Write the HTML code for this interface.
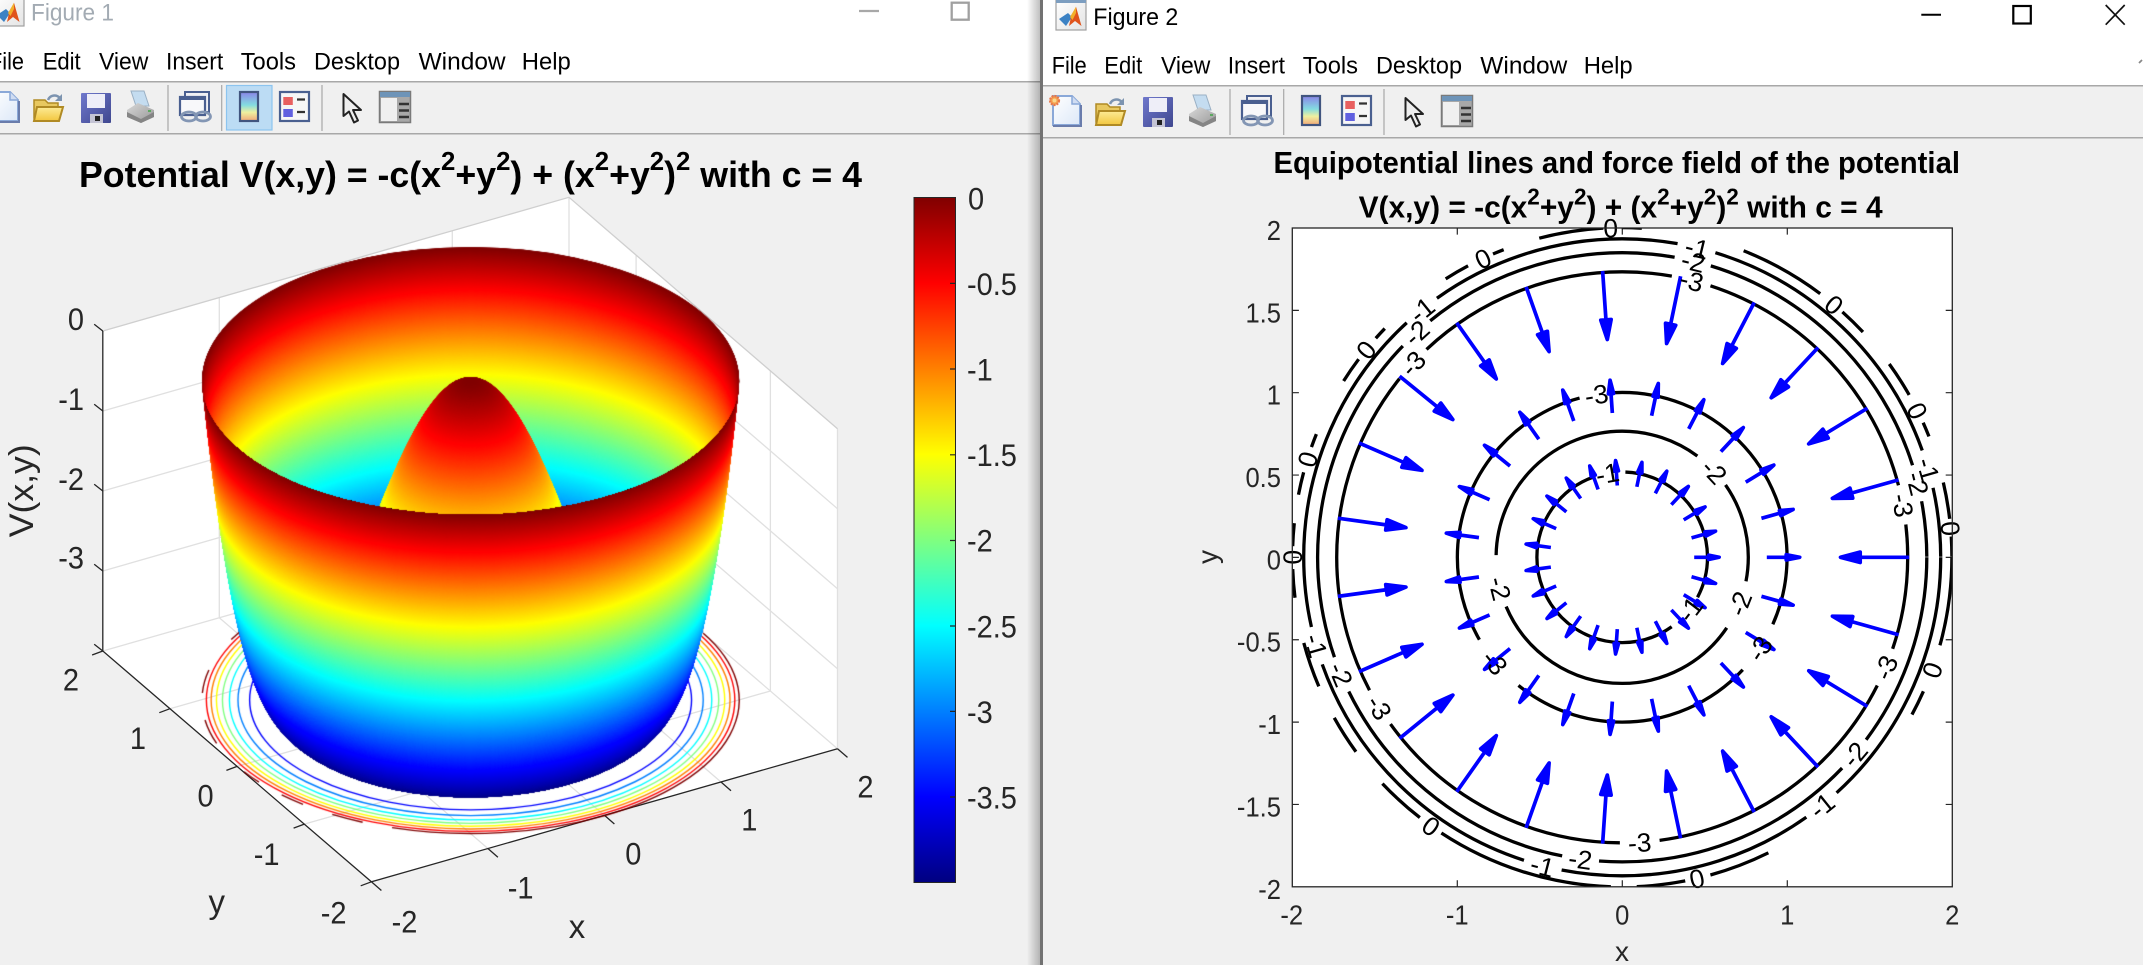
<!DOCTYPE html>
<html lang="en"><head><meta charset="utf-8"><title>Figures</title>
<style>
html,body{margin:0;padding:0;background:#f0f0f0;width:2143px;height:965px;overflow:hidden}
#w{position:absolute;left:0;top:0;width:2143px;height:965px;overflow:hidden;filter:blur(.3px)}
svg,canvas{position:absolute;left:0;top:0}
text{font-family:"Liberation Sans",Arial,sans-serif}
.m{font-size:24px;fill:#000}
.t{font-size:31.5px;fill:#262626;transform-box:fill-box;transform-origin:0% 50%;transform:scaleX(.92)}
.s{font-size:27.5px;fill:#262626;transform-box:fill-box;transform-origin:0% 50%;transform:scaleX(.93)}
.c{text-anchor:middle;transform-origin:50% 50%}
.e{text-anchor:end;transform-origin:100% 50%}
.l{font-size:26.5px;fill:#000;text-anchor:middle}
</style></head><body><div id="w">
<svg width="2143" height="965" viewBox="0 0 2143 965">
<defs>
<linearGradient id="jetg" x1="0" y1="1" x2="0" y2="0"><stop offset="0" stop-color="#000080"/><stop offset=".125" stop-color="#0000ff"/><stop offset=".375" stop-color="#00ffff"/><stop offset=".625" stop-color="#ffff00"/><stop offset=".875" stop-color="#ff0000"/><stop offset="1" stop-color="#800000"/></linearGradient>
<linearGradient id="shd" x1="0" y1="0" x2="1" y2="0"><stop offset="0" stop-color="#000" stop-opacity="0"/><stop offset="1" stop-color="#000" stop-opacity=".25"/></linearGradient>
<linearGradient id="fold" x1="0" y1="0" x2="0" y2="1"><stop offset="0" stop-color="#fdeb96"/><stop offset="1" stop-color="#f2c63e"/></linearGradient>
<linearGradient id="cbi" x1="0" y1="0" x2="0" y2="1"><stop offset="0" stop-color="#8a84e8"/><stop offset=".45" stop-color="#84dce0"/><stop offset=".7" stop-color="#eef0a0"/><stop offset="1" stop-color="#f2a878"/></linearGradient>
<linearGradient id="doc" x1="0" y1="0" x2="1" y2="1"><stop offset="0" stop-color="#fff"/><stop offset="1" stop-color="#dce8f8"/></linearGradient>
<linearGradient id="box" x1="0" y1="0" x2="1" y2="1"><stop offset="0" stop-color="#fff"/><stop offset="1" stop-color="#e4e4e4"/></linearGradient>
<linearGradient id="prt" x1="0" y1="0" x2="1" y2="1"><stop offset="0" stop-color="#d8d8d8"/><stop offset="1" stop-color="#969696"/></linearGradient>
<linearGradient id="sv" x1="0" y1="0" x2="1" y2="1"><stop offset="0" stop-color="#6f78cc"/><stop offset="1" stop-color="#3f478f"/></linearGradient>
<clipPath id="ax"><rect x="-329.9" y="-329.3" width="660" height="658.7"/></clipPath>
<g id="logo">
<rect x="-6" y="-4" width="30" height="30" fill="url(#box)" stroke="#a0a0a0" stroke-width="1.2"/>
<rect x="-6" y="-4" width="30" height="3" fill="#7d9ec0"/>
<path d="M-3 15 6 9 10 13 4 22Z" fill="#3c82c4"/>
<path d="M14 2.700 19.500 22 13 17 7 22 9 13Z" fill="#e0541c"/>
<path d="M14 2.700 8 13 10.500 16 14 9Z" fill="#f2b02c"/>
</g>
<g id="tools">
<!-- new -->
<path d="M-9 92H10L18 100V121H-9Z" fill="url(#doc)" stroke="#8aa8d8" stroke-width="2"/>
<path d="M-9 122H19V101" fill="none" stroke="#6a7cab" stroke-width="2"/>
<path d="M10 92V100H18" fill="#cfdcf2" stroke="#8aa8d8" stroke-width="1.500"/>
<circle cx="-7.500" cy="96.500" r="4.500" fill="#f4a050" stroke="#e8784a" stroke-width="2.200" stroke-dasharray="2 1"/>
<circle cx="-7.500" cy="96.500" r="2" fill="#f8d890"/>
<!-- open -->
<path d="M34 104V100H45L48 103H58V118H34Z" fill="#e8c860" stroke="#b08a24" stroke-width="1.500"/>
<path d="M34 121 37 107H63L59 121Z" fill="url(#fold)" stroke="#b08a24" stroke-width="2"/>
<path d="M48 100C50 95 56 94 60 98" fill="none" stroke="#7d94b0" stroke-width="2.500"/>
<path d="M62 94V101H55Z" fill="#7d94b0"/>
<!-- save -->
<rect x="81" y="93" width="30" height="30" rx="1" fill="url(#sv)"/>
<rect x="87" y="94" width="18" height="14" fill="#eeeef8"/>
<rect x="90" y="114" width="13" height="9" fill="#c4c4d4"/>
<rect x="95" y="116" width="5" height="5" fill="#222"/>
<!-- print -->
<path d="M131 91H144L149 106H136Z" fill="#c4dcf0" stroke="#9ab0c4"/>
<path d="M127 110 138 103 154 110V117L141 123 127 117Z" fill="url(#prt)"/>
<path d="M127 112 141 119 154 112V117L141 123 127 117Z" fill="#858585"/>
<rect x="148" y="110" width="3" height="2" fill="#5ca860"/>
<!-- link -->
<rect x="185" y="92" width="24" height="20" fill="#f0f0f4" stroke="#4a5f90" stroke-width="2"/>
<rect x="180" y="97" width="25" height="18" fill="#f8f8fa" stroke="#4a5f90" stroke-width="2.200"/>
<rect x="180" y="97" width="25" height="3" fill="#4a5f90"/>
<ellipse cx="189" cy="116.500" rx="7.500" ry="4.500" fill="none" stroke="#8396b4" stroke-width="2.800"/>
<ellipse cx="203" cy="116.500" rx="7.500" ry="4.500" fill="none" stroke="#8396b4" stroke-width="2.800"/>
<!-- seps -->
<path d="M168 85V131M221.700 85V131M322 85V131" stroke="#a8a8a8" stroke-width="1.200"/>
<!-- colorbar -->
<rect x="240" y="92" width="18" height="29" fill="url(#cbi)" stroke="#41557f" stroke-width="2.200"/>
<!-- legend -->
<rect x="280" y="92" width="29" height="29" fill="#f6f6f6" stroke="#4a6090" stroke-width="2.200"/>
<rect x="283.300" y="97" width="9.500" height="8" fill="#e86060"/>
<rect x="283.300" y="109" width="9.500" height="8" fill="#6060e0"/>
<path d="M297 99.500H305M297 112H305" stroke="#333" stroke-width="2.200"/>
<!-- pointer -->
<path d="M343.500 94V116L349 111.500 354 122.500 358 120.500 353 110H361Z" fill="#eee" stroke="#222" stroke-width="2" stroke-linejoin="round"/>
<!-- panel -->
<rect x="379.500" y="91.500" width="31" height="31" fill="#a8a8a8" stroke="#7a7a7a" stroke-width="1.500"/>
<rect x="380" y="92" width="30" height="5" fill="#6e94b8"/>
<rect x="381" y="98" width="16" height="23" fill="#f0f0f0"/>
<path d="M399 104H409M399 110.500H409M399 117H409" stroke="#333" stroke-width="2.400"/>
</g>
<g id="a1"><path d="M287 0H230M238-5.200 218.300 0 238 5.200Z" fill="#00f" stroke="#00f" stroke-width="3.700" stroke-linejoin="round"/></g>
<g id="a2"><path d="M144.600 0H170M164-2.600 177.500 0 164 2.600Z" fill="#00f" stroke="#00f" stroke-width="3.700" stroke-linejoin="round"/></g>
<g id="a3"><path d="M72 0H90M86.500-2.200 97 0 86.500 2.200Z" fill="#00f" stroke="#00f" stroke-width="3.600" stroke-linejoin="round"/></g>
</defs>

<!-- LEFT WINDOW CHROME -->
<rect x="0" y="0" width="1040" height="81" fill="#fff"/>
<rect x="0" y="81" width="1040" height="1.500" fill="#a8a8a8"/>
<rect x="0" y="133" width="1040" height="1.500" fill="#a8a8a8"/>
<use href="#logo"/>
<text x="31" y="20.700" font-size="24" fill="#a3abb3" textLength="83" lengthAdjust="spacingAndGlyphs">Figure 1</text>
<text class="m" x="-11" y="69.300" textLength="35" lengthAdjust="spacingAndGlyphs">File</text>
<text class="m" x="42.700" y="69.300" textLength="38" lengthAdjust="spacingAndGlyphs">Edit</text>
<text class="m" x="99" y="69.300" textLength="49.300" lengthAdjust="spacingAndGlyphs">View</text>
<text class="m" x="166" y="69.300" textLength="57.300" lengthAdjust="spacingAndGlyphs">Insert</text>
<text class="m" x="240.700" y="69.300" textLength="55.300" lengthAdjust="spacingAndGlyphs">Tools</text>
<text class="m" x="314" y="69.300" textLength="86" lengthAdjust="spacingAndGlyphs">Desktop</text>
<text class="m" x="418.600" y="69.300" textLength="87" lengthAdjust="spacingAndGlyphs">Window</text>
<text class="m" x="521.800" y="69.300" textLength="49" lengthAdjust="spacingAndGlyphs">Help</text>
<rect x="226.500" y="85.500" width="45.500" height="44.500" fill="#bcdcf4" stroke="#8cc4ef" stroke-width="1.200"/>
<use href="#tools"/>
<path d="M859 11H879" stroke="#a8a8a8" stroke-width="2.200"/>
<rect x="951.700" y="2.700" width="17" height="17" fill="none" stroke="#a0a0a0" stroke-width="2.300"/>

<!-- 3D AXES -->
<path d="M102.800 331 569 197.300V517.900L102.800 651Z" fill="#fff"/>
<path d="M569 197.300 837.500 428.700V748.700L569 517.900Z" fill="#fff"/>
<path d="M102.800 651 371.400 881.800 837.500 748.700 569 517.900Z" fill="#fff"/>
<g stroke="#e0e0e0" stroke-width="1.300" fill="none">
<path d="M102.800 411 569 277.300 837.500 508.700M102.800 491 569 357.300 837.500 588.700M102.800 571 569 437.300 837.500 668.700"/>
<path d="M219.300 297.700V617.700M335.800 264.300V584.300M452.300 230.700V550.900M636.100 255V575.600M703.300 312.700V633.300M770.400 370.400V691"/>
<path d="M170 708.700 636.100 575.600M237.100 766.400 703.300 633.300M304.300 824.100 770.400 691"/>
<path d="M487.900 848.500 219.300 617.700M604.400 815.300 335.800 584.300M721 782 452.300 550.900"/>
<path d="M102.800 651 569 517.900 837.500 748.700"/>
<path d="M569 197.300V517.900M837.500 428.700V748.700"/>
</g>
<path d="M102.800 331 569 197.300 837.500 428.700" fill="none" stroke="#cfcfcf" stroke-width="1.300"/>
<g stroke="#262626" stroke-width="1.300" fill="none">
<path d="M102.800 331V651L371.400 881.800 837.500 748.700"/>
<path d="M102.800 331l-8.600-6.800M102.800 411l-8.600-6.800M102.800 491l-8.600-6.800M102.800 571l-8.600-6.800M102.800 651l-8.600-6.800"/>
<path d="M102.800 651l-10.700 4M170 708.700l-10.700 4M237.100 766.400l-10.700 4M304.300 824.100l-10.700 4M371.400 881.800l-10.700 4"/>
<path d="M371.400 881.800l10 8.700M487.900 848.500l10 8.700M604.400 815.300l10 8.700M721 782l10 8.700M837.500 748.700l10 8.700"/>
</g>
<g>
<text class="t e" x="84" y="330">0</text>
<text class="t e" x="84" y="409.800">-1</text>
<text class="t e" x="84" y="490">-2</text>
<text class="t e" x="84" y="568.500">-3</text>
<text class="t c" x="71" y="690.500">2</text>
<text class="t c" x="138" y="749">1</text>
<text class="t c" x="205.600" y="806.300">0</text>
<text class="t c" x="266.600" y="864.900">-1</text>
<text class="t c" x="333.600" y="923.400">-2</text>
<text class="t c" x="404.500" y="932.300">-2</text>
<text class="t c" x="520.600" y="898.400">-1</text>
<text class="t c" x="633.300" y="864.400">0</text>
<text class="t c" x="749.300" y="830.500">1</text>
<text class="t c" x="865.400" y="797.400">2</text>
</g>
<text x="577" y="938" font-size="33" fill="#262626" text-anchor="middle">x</text>
<text x="216.800" y="913" font-size="33" fill="#262626" text-anchor="middle">y</text>
<text transform="translate(33,490.800) rotate(-90)" font-size="34" fill="#262626" text-anchor="middle" textLength="93" lengthAdjust="spacingAndGlyphs">V(x,y)</text>

<text x="79" y="187" font-size="36" font-weight="bold" fill="#000" textLength="783" lengthAdjust="spacingAndGlyphs">Potential V(x,y) = -c(x<tspan dy="-17" font-size="26">2</tspan><tspan dy="17">+y</tspan><tspan dy="-17" font-size="26">2</tspan><tspan dy="17">) + (x</tspan><tspan dy="-17" font-size="26">2</tspan><tspan dy="17">+y</tspan><tspan dy="-17" font-size="26">2</tspan><tspan dy="17">)</tspan><tspan dy="-17" font-size="26">2</tspan><tspan dy="17"> with c = 4</tspan></text>

<!-- colorbar -->
<rect x="914" y="197.500" width="41.500" height="685" fill="url(#jetg)" stroke="#262626" stroke-width="1"/>
<path d="M950 283.400h5.500M950 369h5.500M950 454.800h5.500M950 540.500h5.500M950 626h5.500M950 711.400h5.500M950 797h5.500" stroke="#262626" stroke-width="1.200"/>
<g>
<text class="t" x="968" y="209.500">0</text>
<text class="t" x="967" y="294.900">-0.5</text>
<text class="t" x="967" y="380.500">-1</text>
<text class="t" x="967" y="466.100">-1.5</text>
<text class="t" x="967" y="551.700">-2</text>
<text class="t" x="967" y="637.500">-2.5</text>
<text class="t" x="967" y="722.900">-3</text>
<text class="t" x="967" y="808.500">-3.5</text>
</g>

<!-- divider -->
<rect x="1027" y="0" width="13" height="965" fill="url(#shd)"/>
<rect x="1040" y="0" width="3" height="965" fill="#727272"/>

<!-- RIGHT WINDOW CHROME -->
<rect x="1043" y="0" width="1100" height="85" fill="#fff"/>
<rect x="1043" y="85" width="1100" height="1.500" fill="#a8a8a8"/>
<rect x="1043" y="137" width="1100" height="1.500" fill="#a8a8a8"/>
<svg x="1043" y="0" width="1100" height="137" viewBox="1043 0 1100 137">
<g transform="translate(1062,4)"><use href="#logo"/><use href="#tools"/></g>
</svg>
<text x="1093.300" y="25" font-size="24" fill="#000" textLength="85" lengthAdjust="spacingAndGlyphs">Figure 2</text>
<text class="m" x="1051.700" y="73.300" textLength="35" lengthAdjust="spacingAndGlyphs">File</text>
<text class="m" x="1104.300" y="73.300" textLength="38" lengthAdjust="spacingAndGlyphs">Edit</text>
<text class="m" x="1161" y="73.300" textLength="49.300" lengthAdjust="spacingAndGlyphs">View</text>
<text class="m" x="1227.700" y="73.300" textLength="57.300" lengthAdjust="spacingAndGlyphs">Insert</text>
<text class="m" x="1302.700" y="73.300" textLength="55.300" lengthAdjust="spacingAndGlyphs">Tools</text>
<text class="m" x="1376" y="73.300" textLength="86" lengthAdjust="spacingAndGlyphs">Desktop</text>
<text class="m" x="1480.300" y="73.300" textLength="87" lengthAdjust="spacingAndGlyphs">Window</text>
<text class="m" x="1583.700" y="73.300" textLength="49" lengthAdjust="spacingAndGlyphs">Help</text>
<path d="M1921.300 14.700H1941" stroke="#000" stroke-width="2"/>
<rect x="2013.300" y="6" width="17.500" height="17.500" fill="none" stroke="#000" stroke-width="2.200"/>
<path d="M2105.700 5 2124.700 24.700M2124.700 5 2105.700 24.700" stroke="#111" stroke-width="1.700"/>
<path d="M2139 63l3-3" stroke="#888" stroke-width="1.800"/>

<text x="1273.500" y="173" font-size="30.500" font-weight="bold" fill="#000" textLength="686.500" lengthAdjust="spacingAndGlyphs">Equipotential lines and force field of the potential</text>
<text x="1358.600" y="217.300" font-size="30.500" font-weight="bold" fill="#000" textLength="524" lengthAdjust="spacingAndGlyphs">V(x,y) = -c(x<tspan dy="-13" font-size="23">2</tspan><tspan dy="13">+y</tspan><tspan dy="-13" font-size="23">2</tspan><tspan dy="13">) + (x</tspan><tspan dy="-13" font-size="23">2</tspan><tspan dy="13">+y</tspan><tspan dy="-13" font-size="23">2</tspan><tspan dy="13">)</tspan><tspan dy="-13" font-size="23">2</tspan><tspan dy="13"> with c = 4</tspan></text>

<!-- 2D AXES -->
<rect x="1292.300" y="228" width="660" height="658.800" fill="#fff"/>
<g stroke="#262626" stroke-width="1.200">
<path d="M1457.300 886.800v-6.600M1622.300 886.800v-6.600M1787.300 886.800v-6.600M1457.300 228v6.600M1622.300 228v6.600M1787.300 228v6.600"/>
<path d="M1292.300 310.350h6.600M1292.300 392.700h6.600M1292.300 475.050h6.600M1292.300 557.400h6.600M1292.300 639.750h6.600M1292.300 722.100h6.600M1292.300 804.450h6.600"/>
<path d="M1952.300 310.350h-6.600M1952.300 392.700h-6.600M1952.300 475.050h-6.600M1952.300 557.400h-6.600M1952.300 639.750h-6.600M1952.300 722.100h-6.600M1952.300 804.450h-6.600"/>
</g>
<g transform="translate(1622.200,557.300)">
<g fill="none" stroke="#000" stroke-width="3.300" clip-path="url(#ax)">
<circle r="329.700" pathLength="360" stroke-dasharray="15.500 8.500 4.500 35.200 10.800 4.500 8.500 4.500 31.300 4.600 8.800 7.200 7 6.100 8 8 5 4 4 5 4 4.600 2.400 10.400 4.600 4.700 2.300 13.700 4.500 4.800 2 6.500 11.300 3.200 3.500 18.200 15.300 5 5 7.200 6.400 5.400 2.600 8.400 6.400 3.100 3.500 10"/>
<circle r="318.500" pathLength="360" stroke-dasharray="47.700 7 46.300 7 52.400 7 60.100 7 45.600 7 53.400 7 12.500 10"/>
<circle r="304.600" pathLength="360" stroke-dasharray="36.800 7 50.600 7 52.500 7 63.100 7 49 7 55.500 7 10.500 10"/>
<circle r="285.500" pathLength="360" stroke-dasharray="18.700 8 55.800 8 53.800 8 66.500 8 53.300 8 57.400 8 6.500 10"/>
<circle r="164.850" pathLength="360" stroke-dasharray="24 19 86 21 105 12 93 10"/>
<circle r="126.100" pathLength="360" stroke-dasharray="11 23 123 24 125.600 18.400 35 10"/>
<circle r="85.300" pathLength="360" stroke-dasharray="28 26.600 196.400 21.500 87.500 10"/>
</g>
<g>
<use href="#a1"/><use href="#a1" transform="rotate(15.652)"/><use href="#a1" transform="rotate(31.304)"/><use href="#a1" transform="rotate(46.957)"/><use href="#a1" transform="rotate(62.609)"/><use href="#a1" transform="rotate(78.261)"/><use href="#a1" transform="rotate(93.913)"/><use href="#a1" transform="rotate(109.565)"/><use href="#a1" transform="rotate(125.217)"/><use href="#a1" transform="rotate(140.87)"/><use href="#a1" transform="rotate(156.522)"/><use href="#a1" transform="rotate(172.174)"/><use href="#a1" transform="rotate(187.826)"/><use href="#a1" transform="rotate(203.478)"/><use href="#a1" transform="rotate(219.13)"/><use href="#a1" transform="rotate(234.783)"/><use href="#a1" transform="rotate(250.435)"/><use href="#a1" transform="rotate(266.087)"/><use href="#a1" transform="rotate(281.739)"/><use href="#a1" transform="rotate(297.391)"/><use href="#a1" transform="rotate(313.043)"/><use href="#a1" transform="rotate(328.696)"/><use href="#a1" transform="rotate(344.348)"/>
<use href="#a2"/><use href="#a2" transform="rotate(15.652)"/><use href="#a2" transform="rotate(31.304)"/><use href="#a2" transform="rotate(46.957)"/><use href="#a2" transform="rotate(62.609)"/><use href="#a2" transform="rotate(78.261)"/><use href="#a2" transform="rotate(93.913)"/><use href="#a2" transform="rotate(109.565)"/><use href="#a2" transform="rotate(125.217)"/><use href="#a2" transform="rotate(140.87)"/><use href="#a2" transform="rotate(156.522)"/><use href="#a2" transform="rotate(172.174)"/><use href="#a2" transform="rotate(187.826)"/><use href="#a2" transform="rotate(203.478)"/><use href="#a2" transform="rotate(219.13)"/><use href="#a2" transform="rotate(234.783)"/><use href="#a2" transform="rotate(250.435)"/><use href="#a2" transform="rotate(266.087)"/><use href="#a2" transform="rotate(281.739)"/><use href="#a2" transform="rotate(297.391)"/><use href="#a2" transform="rotate(313.043)"/><use href="#a2" transform="rotate(328.696)"/><use href="#a2" transform="rotate(344.348)"/>
<use href="#a3"/><use href="#a3" transform="rotate(15.652)"/><use href="#a3" transform="rotate(31.304)"/><use href="#a3" transform="rotate(46.957)"/><use href="#a3" transform="rotate(62.609)"/><use href="#a3" transform="rotate(78.261)"/><use href="#a3" transform="rotate(93.913)"/><use href="#a3" transform="rotate(109.565)"/><use href="#a3" transform="rotate(125.217)"/><use href="#a3" transform="rotate(140.87)"/><use href="#a3" transform="rotate(156.522)"/><use href="#a3" transform="rotate(172.174)"/><use href="#a3" transform="rotate(187.826)"/><use href="#a3" transform="rotate(203.478)"/><use href="#a3" transform="rotate(219.13)"/><use href="#a3" transform="rotate(234.783)"/><use href="#a3" transform="rotate(250.435)"/><use href="#a3" transform="rotate(266.087)"/><use href="#a3" transform="rotate(281.739)"/><use href="#a3" transform="rotate(297.391)"/><use href="#a3" transform="rotate(313.043)"/><use href="#a3" transform="rotate(328.696)"/><use href="#a3" transform="rotate(344.348)"/>
</g>
<g>
<text class="l" dy=".36em" transform="rotate(20) translate(329.7) rotate(-90)">0</text>
<text class="l" dy=".36em" transform="rotate(76.9) translate(329.7) rotate(-90)">0</text>
<text class="l" dy=".36em" transform="rotate(125.4) translate(329.7) rotate(-90)">0</text>
<text class="l" dy=".36em" transform="rotate(180) translate(329.7) rotate(90)">0</text>
<text class="l" dy=".36em" transform="rotate(197.3) translate(329.7) rotate(90)">0</text>
<text class="l" dy=".36em" transform="rotate(219) translate(329.7) rotate(90)">0</text>
<text class="l" dy=".36em" transform="rotate(245) translate(329.7) rotate(90)">0</text>
<text class="l" dy=".36em" transform="rotate(268) translate(329.7) rotate(90)">0</text>
<text class="l" dy=".36em" transform="rotate(310) translate(329.7) rotate(90)">0</text>
<text class="l" dy=".36em" transform="rotate(333.6) translate(329.7) rotate(90)">0</text>
<text class="l" dy=".36em" transform="rotate(355) translate(329.7) rotate(90)">0</text>
<text class="l" dy=".36em" transform="rotate(51.2) translate(318.5) rotate(-90)">-1</text>
<text class="l" dy=".36em" transform="rotate(104.5) translate(318.5) rotate(-90)">-1</text>
<text class="l" dy=".36em" transform="rotate(163.9) translate(318.5) rotate(-90)">-1</text>
<text class="l" dy=".36em" transform="rotate(231) translate(318.5) rotate(90)">-1</text>
<text class="l" dy=".36em" transform="rotate(283.6) translate(318.5) rotate(90)">-1</text>
<text class="l" dy=".36em" transform="rotate(344) translate(318.5) rotate(90)">-1</text>
<text class="l" dy=".36em" transform="rotate(40.3) translate(304.6) rotate(-90)">-2</text>
<text class="l" dy=".36em" transform="rotate(97.9) translate(304.6) rotate(-90)">-2</text>
<text class="l" dy=".36em" transform="rotate(157.4) translate(304.6) rotate(-90)">-2</text>
<text class="l" dy=".36em" transform="rotate(227.5) translate(304.6) rotate(90)">-2</text>
<text class="l" dy=".36em" transform="rotate(283.5) translate(304.6) rotate(90)">-2</text>
<text class="l" dy=".36em" transform="rotate(346) translate(304.6) rotate(90)">-2</text>
<text class="l" dy=".36em" transform="rotate(22.7) translate(285.5) rotate(-90)">-3</text>
<text class="l" dy=".36em" transform="rotate(86.5) translate(285.5) rotate(-90)">-3</text>
<text class="l" dy=".36em" transform="rotate(148.3) translate(285.5) rotate(-90)">-3</text>
<text class="l" dy=".36em" transform="rotate(222.8) translate(285.5) rotate(90)">-3</text>
<text class="l" dy=".36em" transform="rotate(284.1) translate(285.5) rotate(90)">-3</text>
<text class="l" dy=".36em" transform="rotate(349.5) translate(285.5) rotate(90)">-3</text>
<text class="l" dy=".36em" transform="rotate(33.6) translate(164.85) rotate(-90)">-3</text>
<text class="l" dy=".36em" transform="rotate(140.5) translate(164.85) rotate(-90)">-3</text>
<text class="l" dy=".36em" transform="rotate(261) translate(164.85) rotate(90)">-3</text>
<text class="l" dy=".36em" transform="rotate(21.5) translate(126.1) rotate(-90)">-2</text>
<text class="l" dy=".36em" transform="rotate(165.7) translate(126.1) rotate(-90)">-2</text>
<text class="l" dy=".36em" transform="rotate(317) translate(126.1) rotate(90)">-2</text>
<text class="l" dy=".36em" transform="rotate(37.5) translate(85.3) rotate(-90)">-1</text>
<text class="l" dy=".36em" transform="rotate(260) translate(85.3) rotate(90)">-1</text>
</g>
</g>
<rect x="1292.300" y="228" width="660" height="658.800" fill="none" stroke="#262626" stroke-width="1.300"/>
<g>
<text class="s e" x="1281" y="240">2</text>
<text class="s e" x="1281" y="322.400">1.5</text>
<text class="s e" x="1281" y="404.700">1</text>
<text class="s e" x="1281" y="487">0.5</text>
<text class="s e" x="1281" y="569.400">0</text>
<text class="s e" x="1281" y="651.700">-0.5</text>
<text class="s e" x="1281" y="734.100">-1</text>
<text class="s e" x="1281" y="816.400">-1.5</text>
<text class="s e" x="1281" y="898.800">-2</text>
<text class="s c" x="1291.700" y="924.500">-2</text>
<text class="s c" x="1457.300" y="924.500">-1</text>
<text class="s c" x="1622.300" y="924.500">0</text>
<text class="s c" x="1787.300" y="924.500">1</text>
<text class="s c" x="1952.300" y="924.500">2</text>
</g>
<text x="1622" y="961" font-size="28" fill="#262626" text-anchor="middle">x</text>
<text transform="translate(1217,557) rotate(-90)" font-size="28" fill="#262626" text-anchor="middle">y</text>
</svg>
<canvas id="c" width="2143" height="965"></canvas>
</div>
<script>
(function(){
var c=document.getElementById('c').getContext('2d');
function cl(v){return v<0?0:v>1?1:v}
function jet(z){var t=(z+4)/4;
var r=cl(Math.min(4*t-1.5,-4*t+4.5)),g=cl(Math.min(4*t-.5,-4*t+3.5)),b=cl(Math.min(4*t+.5,-4*t+2.5));
return 'rgb('+Math.round(r*255)+','+Math.round(g*255)+','+Math.round(b*255)+')'}
var CX=470.6,CY=380.5,SZ=80.2,RX=134.3,RY=66.75,FY=700,PI=Math.PI;
function ring(r,z){c.fillStyle=jet(z);c.beginPath();c.ellipse(CX,CY-z*SZ,r*RX,r*RY,0,0,2*PI);c.fill()}
c.lineWidth=1.4;
[-3.5,-3,-2.5,-2,-1.5,-1,-.5].forEach(function(v){
 var r=Math.sqrt(2+Math.sqrt(4+v));c.strokeStyle=jet(v);c.beginPath();c.ellipse(CX,FY,r*RX,r*RY,0,0,2*PI);c.stroke()});
c.strokeStyle=jet(0);
[[-30,107],[113.7,121],[128.6,134.7],[142,147.5],[161,171.4],[183,193],[207,225]].forEach(function(a){
 c.beginPath();c.ellipse(CX,FY,2*RX,2*RY,0,a[0]*PI/180,a[1]*PI/180);c.stroke()});
var s,z,N=3000;
for(var i=0;i<=N;i++){s=2*i/N;z=s*s-4;ring(Math.sqrt(2+s),z)}
c.save();c.beginPath();c.ellipse(CX,CY,2*RX,2*RY,0,0,2*PI);c.clip();
for(i=N;i>=0;i--){s=2*i/N;z=s*s-4;ring(Math.sqrt(2+s),z)}
for(i=0;i<=N;i++){s=2*i/N;z=s*s-4;ring(Math.sqrt(Math.max(0,2-s)),z)}
c.restore();
})();
</script>
</body></html>
